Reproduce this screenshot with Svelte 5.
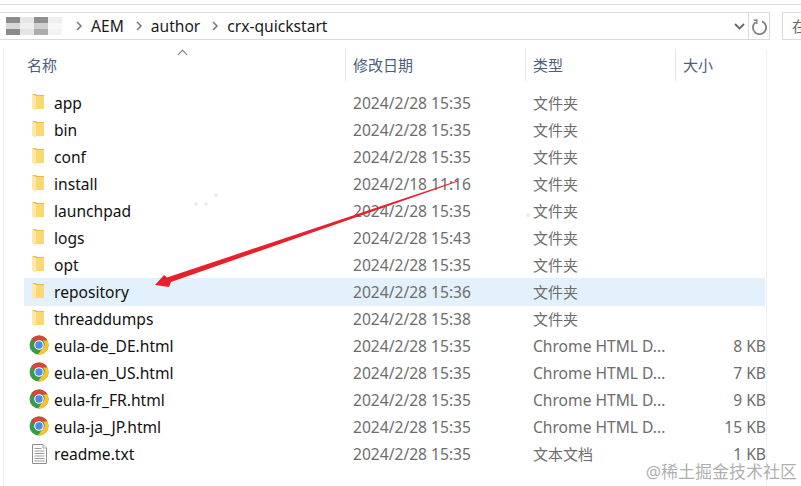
<script lang="ts">
	interface Row {
		name: string;
		date: string;
		type: string;
		size?: string;
		icon: 'folder' | 'chrome' | 'text';
		active?: boolean;
	}

	const folder = '文件夹';
	const html = 'Chrome HTML D...';

	const rows: Row[] = [
		{ name: 'app', date: '2024/2/28 15:35', type: folder, icon: 'folder' },
		{ name: 'bin', date: '2024/2/28 15:35', type: folder, icon: 'folder' },
		{ name: 'conf', date: '2024/2/28 15:35', type: folder, icon: 'folder' },
		{ name: 'install', date: '2024/2/18 11:16', type: folder, icon: 'folder' },
		{ name: 'launchpad', date: '2024/2/28 15:35', type: folder, icon: 'folder' },
		{ name: 'logs', date: '2024/2/28 15:43', type: folder, icon: 'folder' },
		{ name: 'opt', date: '2024/2/28 15:35', type: folder, icon: 'folder' },
		{ name: 'repository', date: '2024/2/28 15:36', type: folder, icon: 'folder', active: true },
		{ name: 'threaddumps', date: '2024/2/28 15:38', type: folder, icon: 'folder' },
		{ name: 'eula-de_DE.html', date: '2024/2/28 15:35', type: html, size: '8 KB', icon: 'chrome' },
		{ name: 'eula-en_US.html', date: '2024/2/28 15:35', type: html, size: '7 KB', icon: 'chrome' },
		{ name: 'eula-fr_FR.html', date: '2024/2/28 15:35', type: html, size: '9 KB', icon: 'chrome' },
		{ name: 'eula-ja_JP.html', date: '2024/2/28 15:35', type: html, size: '15 KB', icon: 'chrome' },
		{ name: 'readme.txt', date: '2024/2/28 15:35', type: '文本文档', size: '1 KB', icon: 'text' }
	];

	const crumbs = ['AEM', 'author', 'crx-quickstart'];
	const blur = ['#8c8c8c', '#d8d8d8', '#8a8a8a', '#e6e6e6', '#efefef', '#e4e4e4', '#8f8f8f', '#cfcfcf', '#adadad', '#efefef', '#f7f7f7', '#f2f2f2'];
</script>

<div class="explorer">
	<div class="topline"></div>
	<div class="toolbar">
		<div class="address">
			<div class="blur">
				{#each blur as c}<i style="background:{c}"></i>{/each}
			</div>
			{#each crumbs as crumb}
				<svg class="sep" viewBox="0 0 8 10" width="8" height="10" aria-hidden="true">
					<path d="M2 1l4 4-4 4" fill="none" stroke="#777" stroke-width="1.5" />
				</svg>
				<span class="crumb">{crumb}</span>
			{/each}
			<svg class="chev" viewBox="0 0 11 7" width="11" height="7" aria-hidden="true">
				<path d="M1 1l4.5 4.5L10 1" fill="none" stroke="#666" stroke-width="1.8" />
			</svg>
			<div class="refresh">
				<svg viewBox="0 0 16 17" width="16" height="17" aria-hidden="true">
					<path d="M4.6 4.2A6.6 6.6 0 1 0 11 3.4" fill="none" stroke="#808080" stroke-width="1.8" />
					<path d="M2.8 2.2L5.8 2v4" fill="none" stroke="#808080" stroke-width="1.4" />
				</svg>
			</div>
		</div>
		<div class="search"><span>在</span></div>
	</div>

	<div class="pane">
		<div class="list">
			<div class="head">
				<div class="hcell first">名称<span class="sort"></span></div>
				<div class="hcell">修改日期</div>
				<div class="hcell">类型</div>
				<div class="hcell">大小</div>
			</div>
			{#each rows as row}
				<div class="row" class:active={row.active}>
					<div class="name">
						<span class="icon {row.icon}">
							{#if row.icon === 'folder'}
								<svg viewBox="0 0 12 17" width="12" height="17" aria-hidden="true">
									<path d="M0 0h4l1 1h7v14H4z" fill="#e6bb50" />
									<path d="M4 2h8v13H4z" fill="#fbd873" />
									<path d="M0 0l4 2v15L0 14.500z" fill="#fde9a8" />
								</svg>
							{:else if row.icon === 'chrome'}
								<svg viewBox="0 0 20 20" width="20" height="20" aria-hidden="true">
									<circle cx="10" cy="10" r="9.500" fill="#3a9b47" />
									<path d="M10 .5a9.500 9.500 0 0 1 8.400 5H10a4.500 4.500 0 0 0-4.300 3L2.600 4A9.500 9.500 0 0 1 10 .5z" fill="#dc4437" />
									<path d="M18.400 5.500A9.500 9.500 0 0 1 9 19.500l4.300-6.300A4.500 4.500 0 0 0 13.600 5.500z" fill="#fbc22d" />
									<circle cx="10" cy="10" r="4.800" fill="#fff" />
									<circle cx="10" cy="10" r="3.700" fill="#4a8af4" />
								</svg>
							{:else}
								<svg viewBox="0 0 15 20" width="15" height="20" aria-hidden="true">
									<path d="M.5.5h10.500l3.500 3.500v15.500H.5z" fill="#fff" stroke="#8e8e8e" />
									<path d="M11 .5v3.500h3.500" fill="#eee" stroke="#aaa" />
									<path d="M2.500 4.500h7M2.500 7h10M2.500 9.500h10M2.500 12h10M2.500 14.500h10M2.500 17h10" stroke="#9c9c9c" />
								</svg>
							{/if}
						</span>
						<span class="label">{row.name}</span>
					</div>
					<div class="cell">{row.date}</div>
					<div class="cell" class:cjk={row.type !== html}>{row.type}</div>
					<div class="cell size">{row.size ?? ''}</div>
				</div>
			{/each}
		</div>
	</div>

	<svg class="arrow" viewBox="0 0 801 486" width="801" height="486" aria-hidden="true">
		<path d="M458 180.500L458 181.500L171 282L169 287L155 285L164 275L167 277.500z" fill="#e8202c" />
	</svg>
	<i class="dot" style="left:194px;top:202px"></i>
	<i class="dot" style="left:204px;top:202px"></i>
	<i class="dot" style="left:214px;top:193px"></i>
	<i class="dot" style="left:526px;top:213px"></i>
	<span class="mark">@稀土掘金技术社区</span>
</div>

<style>
	:global(body) {
		margin: 0;
		background: #fff;
	}
	.explorer {
		position: relative;
		width: 801px;
		height: 486px;
		overflow: hidden;
		background: #fff;
		font-family: 'Noto Sans', 'Noto Sans CJK SC', sans-serif;
		font-size: 15.6px;
	}
	.topline {
		height: 1px;
		margin-top: 4px;
		background: #dcdcdc;
	}
	.toolbar {
		display: flex;
		margin-top: 7px;
		gap: 12px;
	}
	.address {
		flex: 0 0 770px;
		box-sizing: border-box;
		height: 28px;
		display: flex;
		align-items: center;
		border: 1px solid #dadada;
		border-left: 0;
	}
	.blur {
		display: grid;
		grid-template-columns: repeat(4, 14px);
		grid-template-rows: repeat(3, 6px);
		grid-auto-flow: column;
		margin-left: 6px;
		margin-right: 5px;
		width: 56px;
	}
	.blur i {
		display: block;
	}
	.sep {
		margin: 0 8px;
	}
	.crumb {
		color: #1a1a1a;
		margin-right: 3px;
		line-height: 26px;
	}
	.chev {
		margin-left: auto;
		margin-right: 3px;
	}
	.refresh {
		flex: 0 0 20px;
		height: 26px;
		display: flex;
		align-items: center;
		justify-content: center;
		border-left: 1px solid #dadada;
	}
	.search {
		flex: 1;
		height: 28px;
		box-sizing: border-box;
		border: 1px solid #dadada;
		border-right: 0;
		padding-left: 9px;
		line-height: 26px;
		font-size: 15px;
		color: #666;
		overflow: hidden;
	}
	.pane {
		margin: 9px 0 0 3px;
		border-left: 1px solid #f0f0f0;
		height: 437px;
		box-sizing: border-box;
		padding-left: 20px;
	}
	.list {
		width: 742px;
		height: 100%;
		border-right: 1px solid #f0f0f0;
	}
	.head {
		display: grid;
		grid-template-columns: 322px 180px 150px 90px;
		height: 32px;
		margin-bottom: 8px;
		font-size: 15px;
	}
	.hcell {
		position: relative;
		padding-left: 7px;
		line-height: 32px;
		color: #4c607a;
		border-right: 1px solid #e5e5e5;
		box-sizing: border-box;
	}
	.hcell.first {
		padding-left: 3px;
	}
	.hcell:last-child {
		border-right: 0;
	}
	.sort {
		position: absolute;
		left: 155px;
		top: 2px;
		width: 6px;
		height: 6px;
		border-left: 1px solid #777;
		border-top: 1px solid #777;
		transform: rotate(45deg);
	}
	.row {
		display: grid;
		grid-template-columns: 322px 180px 150px 90px;
		height: 27px;
		padding-top: 1px;
		box-sizing: border-box;
		line-height: 26px;
		align-items: center;
		position: relative;
	}
	.row.active::before {
		content: '';
		position: absolute;
		left: 0;
		right: 1px;
		top: 0;
		height: 28px;
		background: #e3f1fc;
	}
	.name,
	.cell {
		position: relative;
	}
	.name {
		display: flex;
		align-items: center;
	}
	.icon {
		flex: 0 0 30px;
		box-sizing: border-box;
		display: flex;
		align-items: center;
		height: 26px;
	}
	.icon.folder {
		padding-left: 8px;
	}
	.icon.folder svg {
		margin-top: -1px;
	}
	.icon.chrome {
		padding-left: 5px;
	}
	.icon.chrome svg {
		margin-top: -2px;
	}
	.icon.text {
		padding-left: 8px;
	}
	.label {
		color: #111;
	}
	.cell {
		padding-left: 7px;
		color: #6d6d6d;
	}
	.cjk {
		font-size: 15px;
	}
	.size {
		padding: 0;
		text-align: right;
	}
	.arrow {
		position: absolute;
		left: 0;
		top: 0;
	}
	.dot {
		position: absolute;
		width: 4px;
		height: 4px;
		border-radius: 50%;
		background: #ececec;
	}
	.mark {
		position: absolute;
		right: 4px;
		top: 458px;
		font-size: 17px;
		color: rgba(120, 120, 120, 0.6);
		white-space: nowrap;
	}
</style>
